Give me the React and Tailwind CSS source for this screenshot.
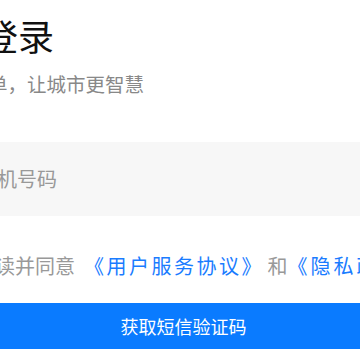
export default function App() {
  return (
    <div className="w-[360px] h-[360px] overflow-hidden bg-white font-['Noto_Sans_CJK_SC',sans-serif]">
      <div className="ml-[-90px] w-[547px] pt-[17px]">
        {/* Title */}
        <h1 className="text-[36px] leading-[36px] text-[#111111] font-normal">欢迎登录</h1>
        <p className="mt-[21px] text-[19.5px] leading-[20px] text-[#888888]">随手拍一单，让城市更智慧</p>

        {/* Phone input */}
        <div className="mt-[48px] h-[74px] bg-[#f7f7f7] flex items-center pl-[7px]">
          <span className="text-[20px] leading-[20px] text-[#999999]">请输入手机号码</span>
        </div>

        {/* Agreement */}
        <div className="mt-[40px] flex items-center gap-[7px] h-[20px]">
          <span className="w-[18px] h-[18px] rounded-full border border-[#cccccc] shrink-0" />
          <p className="text-[20px] leading-[20px] text-[#999999] whitespace-nowrap [text-spacing-trim:space-all]">
            我已阅读并同意
            <span className="ml-[9px] text-[#1a7cff] tracking-[2.5px]">《用户服务协议</span>
            <span className="text-[#1a7cff]">》</span>
            <span className="ml-[6px]">和</span>
            <span className="text-[#1a7cff] tracking-[3px]">《隐私政策》</span>
          </p>
        </div>

        {/* Button */}
        <button className="mt-[27px] w-full h-[46px] bg-[#0a7bff] text-white text-[18px] leading-[18px] flex items-center justify-center">
          获取短信验证码
        </button>
      </div>
    </div>
  );
}
